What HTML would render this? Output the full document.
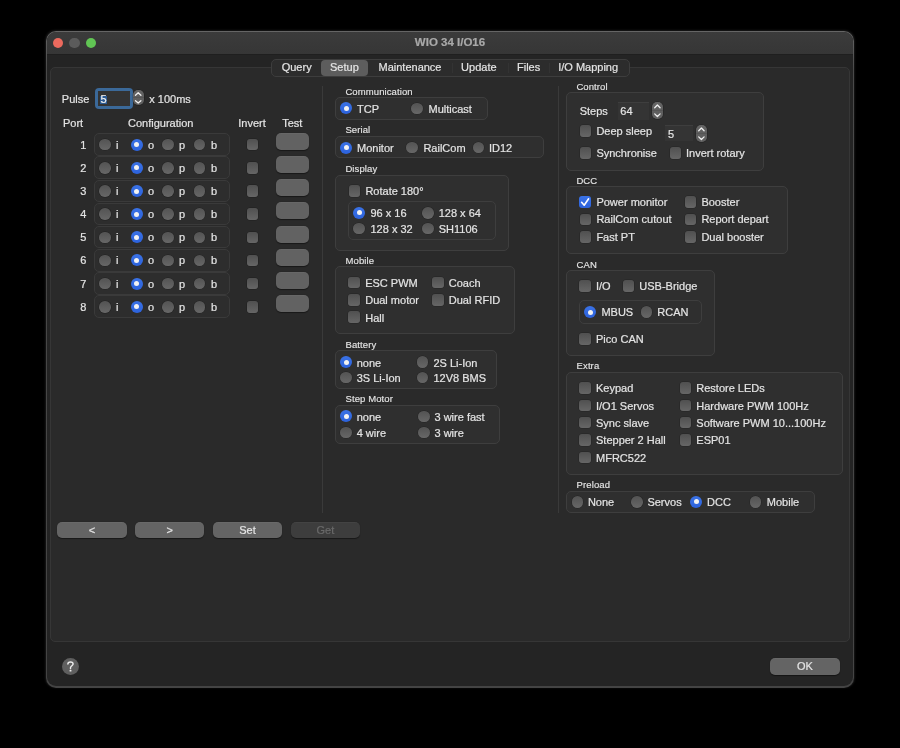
<!DOCTYPE html><html><head><meta charset="utf-8"><style>
html,body{margin:0;padding:0;width:900px;height:748px;background:#000;overflow:hidden}
body{position:relative;font-family:"Liberation Sans",sans-serif}
.t{position:absolute;white-space:nowrap;-webkit-text-stroke:0.2px currentColor}
#root{position:absolute;left:0;top:0;width:900px;height:748px;will-change:transform;background:#000}
.b{position:absolute}
.ru{position:absolute;border-radius:50%;background:linear-gradient(#535353,#676767);box-shadow:0 0 0 0.5px rgba(0,0,0,0.25)}
.rc{position:absolute;border-radius:50%;background:linear-gradient(#3a72e6,#2c62dc)}
.rc i{position:absolute;left:50%;top:50%;width:5px;height:5px;margin:-2.5px 0 0 -2.5px;border-radius:50%;background:#f2f2f2}
.cu{position:absolute;border-radius:3px;background:linear-gradient(#505050,#666666);box-shadow:0 0 0 0.5px rgba(0,0,0,0.25)}
.cc{position:absolute;border-radius:3px;background:linear-gradient(#3a72e6,#2c62dc)}
.cc svg{position:absolute;left:0;top:0}
</style></head><body><div id="root">

<div class="b" style="left:45px;top:30px;width:810px;height:658px;border-radius:11px;background:#000"></div>
<div class="b" style="left:46px;top:31px;width:808px;height:656.5px;border-radius:10px;background:linear-gradient(#656565,#4a4a4a 6%,#444 100%);box-shadow:0 -0.5px 2px 0.5px rgba(40,40,40,0.6)"></div>
<div class="b" style="left:47px;top:32px;width:806px;height:654.4px;border-radius:9px;background:#242424;overflow:hidden"><div style="position:absolute;left:0;top:0;width:806px;height:22px;background:linear-gradient(#3b3b3b,#363636);border-bottom:1px solid #1f1f1f"></div></div>
<div class="b" style="left:52.75px;top:37.75px;width:10.5px;height:10.5px;border-radius:50%;background:#ec6a5e"></div>
<div class="b" style="left:69.15px;top:37.75px;width:10.5px;height:10.5px;border-radius:50%;background:#5b5b5b"></div>
<div class="b" style="left:85.55px;top:37.75px;width:10.5px;height:10.5px;border-radius:50%;background:#61c554"></div>
<div class="t" style="left:250px;width:400px;text-align:center;top:36px;font-size:11.5px;line-height:13px;color:#a9a9a9;font-weight:bold;">WIO 34 I/O16</div>
<div class="b" style="left:50px;top:67px;width:800px;height:575px;background:#2a2a2a;border:1px solid #363636;border-radius:5px;box-sizing:border-box;"></div>
<div class="b" style="left:271px;top:59px;width:358.5px;height:17.700000000000003px;background:#2c2c2c;border:1px solid #3d3d3d;border-radius:5px;box-sizing:border-box;"></div>
<div class="b" style="left:321px;top:59.5px;width:47.3px;height:16.2px;background:#5d5d5d;border-radius:4px"></div>
<div class="b" style="left:451.6px;top:63px;width:1px;height:10px;background:#333333"></div>
<div class="b" style="left:507.5px;top:63px;width:1px;height:10px;background:#333333"></div>
<div class="b" style="left:548.7px;top:63px;width:1px;height:10px;background:#333333"></div>
<div class="t" style="left:281.7px;top:61px;font-size:11px;line-height:13px;color:#e4e4e4;font-weight:normal;">Query</div>
<div class="t" style="left:330px;top:61px;font-size:11px;line-height:13px;color:#e4e4e4;font-weight:normal;">Setup</div>
<div class="t" style="left:378.5px;top:61px;font-size:11px;line-height:13px;color:#e4e4e4;font-weight:normal;">Maintenance</div>
<div class="t" style="left:461.1px;top:61px;font-size:11px;line-height:13px;color:#e4e4e4;font-weight:normal;">Update</div>
<div class="t" style="left:517px;top:61px;font-size:11px;line-height:13px;color:#e4e4e4;font-weight:normal;">Files</div>
<div class="t" style="left:558.2px;top:61px;font-size:11px;line-height:13px;color:#e4e4e4;font-weight:normal;">I/O Mapping</div>
<div class="t" style="left:61.8px;top:93px;font-size:11px;line-height:13px;color:#e4e4e4;font-weight:normal;">Pulse</div>
<div class="b" style="left:95px;top:87.7px;width:37.8px;height:21.6px;border-radius:4px;background:#3b6999"></div>
<div class="b" style="left:98.3px;top:90.7px;width:31.4px;height:15.7px;background:#333333"></div>
<div class="b" style="left:100px;top:95.6px;width:7.1px;height:8.6px;background:#2c5a92"></div>
<div class="t" style="left:100.5px;top:93px;font-size:11px;line-height:13px;color:#f0f0f0;font-weight:normal;">5</div>
<div class="b" style="left:133.4px;top:90.1px;width:10.400000000000006px;height:15.300000000000011px;background:linear-gradient(#666,#5e5e5e 48%,#555 50%,#5e5e5e 52%,#616161);border-radius:5px;box-shadow:0 0 0 0.5px rgba(0,0,0,0.3)"><svg style="position:absolute;left:0;top:0" width="10.400000000000006" height="15.300000000000011" viewBox="0 0 10.400000000000006 15.300000000000011"><path d="M2.50 5.20 L5.20 2.75 L7.90 5.20" fill="none" stroke="#f0f0f0" stroke-width="1.3" stroke-linecap="round" stroke-linejoin="round"/><path d="M2.50 10.71 L5.20 13.01 L7.90 10.71" fill="none" stroke="#f0f0f0" stroke-width="1.3" stroke-linecap="round" stroke-linejoin="round"/></svg></div>
<div class="t" style="left:149.3px;top:93px;font-size:11px;line-height:13px;color:#e4e4e4;font-weight:normal;">x 100ms</div>
<div class="t" style="left:63px;top:117px;font-size:11px;line-height:13px;color:#e4e4e4;font-weight:normal;">Port</div>
<div class="t" style="left:128px;top:117px;font-size:11px;line-height:13px;color:#e4e4e4;font-weight:normal;">Configuration</div>
<div class="t" style="left:238.3px;top:117px;font-size:11px;line-height:13px;color:#e4e4e4;font-weight:normal;">Invert</div>
<div class="t" style="left:282.2px;top:117px;font-size:11px;line-height:13px;color:#e4e4e4;font-weight:normal;">Test</div>
<div class="b" style="left:94.3px;top:133.3px;width:135.89999999999998px;height:22.5px;background:#2d2d2d;border:1px solid #3a3a3a;border-radius:5px;box-sizing:border-box;"></div>
<div class="t" style="right:813.7px;top:138.70000000000002px;font-size:11px;line-height:13px;color:#e4e4e4;font-weight:normal;">1</div>
<div class="ru" style="left:99.3px;top:138.9px;width:11.6px;height:11.6px"></div>
<div class="t" style="left:116px;top:138.70000000000002px;font-size:11px;line-height:13px;color:#e4e4e4;font-weight:normal;">i</div>
<div class="rc" style="left:130.7px;top:138.70000000000002px;width:12px;height:12px"><i></i></div>
<div class="t" style="left:148px;top:138.70000000000002px;font-size:11px;line-height:13px;color:#e4e4e4;font-weight:normal;">o</div>
<div class="ru" style="left:162.2px;top:138.9px;width:11.6px;height:11.6px"></div>
<div class="t" style="left:179px;top:138.70000000000002px;font-size:11px;line-height:13px;color:#e4e4e4;font-weight:normal;">p</div>
<div class="ru" style="left:193.6px;top:138.9px;width:11.6px;height:11.6px"></div>
<div class="t" style="left:211px;top:138.70000000000002px;font-size:11px;line-height:13px;color:#e4e4e4;font-weight:normal;">b</div>
<div class="cu" style="left:246.75px;top:138.95000000000002px;width:11.5px;height:11.5px"></div>
<div class="b" style="left:276px;top:132.9px;width:33px;height:17px;background:#626262;border-radius:5px;box-shadow:0 0.5px 1px rgba(0,0,0,0.45),inset 0 0.5px 0 rgba(255,255,255,0.07)"></div>
<div class="b" style="left:94.3px;top:156.45000000000002px;width:135.89999999999998px;height:22.5px;background:#2d2d2d;border:1px solid #3a3a3a;border-radius:5px;box-sizing:border-box;"></div>
<div class="t" style="right:813.7px;top:161.85000000000002px;font-size:11px;line-height:13px;color:#e4e4e4;font-weight:normal;">2</div>
<div class="ru" style="left:99.3px;top:162.05px;width:11.6px;height:11.6px"></div>
<div class="t" style="left:116px;top:161.85000000000002px;font-size:11px;line-height:13px;color:#e4e4e4;font-weight:normal;">i</div>
<div class="rc" style="left:130.7px;top:161.85000000000002px;width:12px;height:12px"><i></i></div>
<div class="t" style="left:148px;top:161.85000000000002px;font-size:11px;line-height:13px;color:#e4e4e4;font-weight:normal;">o</div>
<div class="ru" style="left:162.2px;top:162.05px;width:11.6px;height:11.6px"></div>
<div class="t" style="left:179px;top:161.85000000000002px;font-size:11px;line-height:13px;color:#e4e4e4;font-weight:normal;">p</div>
<div class="ru" style="left:193.6px;top:162.05px;width:11.6px;height:11.6px"></div>
<div class="t" style="left:211px;top:161.85000000000002px;font-size:11px;line-height:13px;color:#e4e4e4;font-weight:normal;">b</div>
<div class="cu" style="left:246.75px;top:162.10000000000002px;width:11.5px;height:11.5px"></div>
<div class="b" style="left:276px;top:156.05px;width:33px;height:17px;background:#626262;border-radius:5px;box-shadow:0 0.5px 1px rgba(0,0,0,0.45),inset 0 0.5px 0 rgba(255,255,255,0.07)"></div>
<div class="b" style="left:94.3px;top:179.60000000000002px;width:135.89999999999998px;height:22.5px;background:#2d2d2d;border:1px solid #3a3a3a;border-radius:5px;box-sizing:border-box;"></div>
<div class="t" style="right:813.7px;top:185.00000000000003px;font-size:11px;line-height:13px;color:#e4e4e4;font-weight:normal;">3</div>
<div class="ru" style="left:99.3px;top:185.20000000000002px;width:11.6px;height:11.6px"></div>
<div class="t" style="left:116px;top:185.00000000000003px;font-size:11px;line-height:13px;color:#e4e4e4;font-weight:normal;">i</div>
<div class="rc" style="left:130.7px;top:185.00000000000003px;width:12px;height:12px"><i></i></div>
<div class="t" style="left:148px;top:185.00000000000003px;font-size:11px;line-height:13px;color:#e4e4e4;font-weight:normal;">o</div>
<div class="ru" style="left:162.2px;top:185.20000000000002px;width:11.6px;height:11.6px"></div>
<div class="t" style="left:179px;top:185.00000000000003px;font-size:11px;line-height:13px;color:#e4e4e4;font-weight:normal;">p</div>
<div class="ru" style="left:193.6px;top:185.20000000000002px;width:11.6px;height:11.6px"></div>
<div class="t" style="left:211px;top:185.00000000000003px;font-size:11px;line-height:13px;color:#e4e4e4;font-weight:normal;">b</div>
<div class="cu" style="left:246.75px;top:185.25000000000003px;width:11.5px;height:11.5px"></div>
<div class="b" style="left:276px;top:179.20000000000002px;width:33px;height:17px;background:#626262;border-radius:5px;box-shadow:0 0.5px 1px rgba(0,0,0,0.45),inset 0 0.5px 0 rgba(255,255,255,0.07)"></div>
<div class="b" style="left:94.3px;top:202.75px;width:135.89999999999998px;height:22.5px;background:#2d2d2d;border:1px solid #3a3a3a;border-radius:5px;box-sizing:border-box;"></div>
<div class="t" style="right:813.7px;top:208.15px;font-size:11px;line-height:13px;color:#e4e4e4;font-weight:normal;">4</div>
<div class="ru" style="left:99.3px;top:208.35px;width:11.6px;height:11.6px"></div>
<div class="t" style="left:116px;top:208.15px;font-size:11px;line-height:13px;color:#e4e4e4;font-weight:normal;">i</div>
<div class="rc" style="left:130.7px;top:208.15px;width:12px;height:12px"><i></i></div>
<div class="t" style="left:148px;top:208.15px;font-size:11px;line-height:13px;color:#e4e4e4;font-weight:normal;">o</div>
<div class="ru" style="left:162.2px;top:208.35px;width:11.6px;height:11.6px"></div>
<div class="t" style="left:179px;top:208.15px;font-size:11px;line-height:13px;color:#e4e4e4;font-weight:normal;">p</div>
<div class="ru" style="left:193.6px;top:208.35px;width:11.6px;height:11.6px"></div>
<div class="t" style="left:211px;top:208.15px;font-size:11px;line-height:13px;color:#e4e4e4;font-weight:normal;">b</div>
<div class="cu" style="left:246.75px;top:208.4px;width:11.5px;height:11.5px"></div>
<div class="b" style="left:276px;top:202.35px;width:33px;height:17px;background:#626262;border-radius:5px;box-shadow:0 0.5px 1px rgba(0,0,0,0.45),inset 0 0.5px 0 rgba(255,255,255,0.07)"></div>
<div class="b" style="left:94.3px;top:225.9px;width:135.89999999999998px;height:22.5px;background:#2d2d2d;border:1px solid #3a3a3a;border-radius:5px;box-sizing:border-box;"></div>
<div class="t" style="right:813.7px;top:231.3px;font-size:11px;line-height:13px;color:#e4e4e4;font-weight:normal;">5</div>
<div class="ru" style="left:99.3px;top:231.5px;width:11.6px;height:11.6px"></div>
<div class="t" style="left:116px;top:231.3px;font-size:11px;line-height:13px;color:#e4e4e4;font-weight:normal;">i</div>
<div class="rc" style="left:130.7px;top:231.3px;width:12px;height:12px"><i></i></div>
<div class="t" style="left:148px;top:231.3px;font-size:11px;line-height:13px;color:#e4e4e4;font-weight:normal;">o</div>
<div class="ru" style="left:162.2px;top:231.5px;width:11.6px;height:11.6px"></div>
<div class="t" style="left:179px;top:231.3px;font-size:11px;line-height:13px;color:#e4e4e4;font-weight:normal;">p</div>
<div class="ru" style="left:193.6px;top:231.5px;width:11.6px;height:11.6px"></div>
<div class="t" style="left:211px;top:231.3px;font-size:11px;line-height:13px;color:#e4e4e4;font-weight:normal;">b</div>
<div class="cu" style="left:246.75px;top:231.55px;width:11.5px;height:11.5px"></div>
<div class="b" style="left:276px;top:225.5px;width:33px;height:17px;background:#626262;border-radius:5px;box-shadow:0 0.5px 1px rgba(0,0,0,0.45),inset 0 0.5px 0 rgba(255,255,255,0.07)"></div>
<div class="b" style="left:94.3px;top:249.05px;width:135.89999999999998px;height:22.5px;background:#2d2d2d;border:1px solid #3a3a3a;border-radius:5px;box-sizing:border-box;"></div>
<div class="t" style="right:813.7px;top:254.45px;font-size:11px;line-height:13px;color:#e4e4e4;font-weight:normal;">6</div>
<div class="ru" style="left:99.3px;top:254.64999999999998px;width:11.6px;height:11.6px"></div>
<div class="t" style="left:116px;top:254.45px;font-size:11px;line-height:13px;color:#e4e4e4;font-weight:normal;">i</div>
<div class="rc" style="left:130.7px;top:254.45px;width:12px;height:12px"><i></i></div>
<div class="t" style="left:148px;top:254.45px;font-size:11px;line-height:13px;color:#e4e4e4;font-weight:normal;">o</div>
<div class="ru" style="left:162.2px;top:254.64999999999998px;width:11.6px;height:11.6px"></div>
<div class="t" style="left:179px;top:254.45px;font-size:11px;line-height:13px;color:#e4e4e4;font-weight:normal;">p</div>
<div class="ru" style="left:193.6px;top:254.64999999999998px;width:11.6px;height:11.6px"></div>
<div class="t" style="left:211px;top:254.45px;font-size:11px;line-height:13px;color:#e4e4e4;font-weight:normal;">b</div>
<div class="cu" style="left:246.75px;top:254.7px;width:11.5px;height:11.5px"></div>
<div class="b" style="left:276px;top:248.65px;width:33px;height:17px;background:#626262;border-radius:5px;box-shadow:0 0.5px 1px rgba(0,0,0,0.45),inset 0 0.5px 0 rgba(255,255,255,0.07)"></div>
<div class="b" style="left:94.3px;top:272.2px;width:135.89999999999998px;height:22.5px;background:#2d2d2d;border:1px solid #3a3a3a;border-radius:5px;box-sizing:border-box;"></div>
<div class="t" style="right:813.7px;top:277.59999999999997px;font-size:11px;line-height:13px;color:#e4e4e4;font-weight:normal;">7</div>
<div class="ru" style="left:99.3px;top:277.79999999999995px;width:11.6px;height:11.6px"></div>
<div class="t" style="left:116px;top:277.59999999999997px;font-size:11px;line-height:13px;color:#e4e4e4;font-weight:normal;">i</div>
<div class="rc" style="left:130.7px;top:277.59999999999997px;width:12px;height:12px"><i></i></div>
<div class="t" style="left:148px;top:277.59999999999997px;font-size:11px;line-height:13px;color:#e4e4e4;font-weight:normal;">o</div>
<div class="ru" style="left:162.2px;top:277.79999999999995px;width:11.6px;height:11.6px"></div>
<div class="t" style="left:179px;top:277.59999999999997px;font-size:11px;line-height:13px;color:#e4e4e4;font-weight:normal;">p</div>
<div class="ru" style="left:193.6px;top:277.79999999999995px;width:11.6px;height:11.6px"></div>
<div class="t" style="left:211px;top:277.59999999999997px;font-size:11px;line-height:13px;color:#e4e4e4;font-weight:normal;">b</div>
<div class="cu" style="left:246.75px;top:277.84999999999997px;width:11.5px;height:11.5px"></div>
<div class="b" style="left:276px;top:271.8px;width:33px;height:17px;background:#626262;border-radius:5px;box-shadow:0 0.5px 1px rgba(0,0,0,0.45),inset 0 0.5px 0 rgba(255,255,255,0.07)"></div>
<div class="b" style="left:94.3px;top:295.35px;width:135.89999999999998px;height:22.5px;background:#2d2d2d;border:1px solid #3a3a3a;border-radius:5px;box-sizing:border-box;"></div>
<div class="t" style="right:813.7px;top:300.75px;font-size:11px;line-height:13px;color:#e4e4e4;font-weight:normal;">8</div>
<div class="ru" style="left:99.3px;top:300.95px;width:11.6px;height:11.6px"></div>
<div class="t" style="left:116px;top:300.75px;font-size:11px;line-height:13px;color:#e4e4e4;font-weight:normal;">i</div>
<div class="rc" style="left:130.7px;top:300.75px;width:12px;height:12px"><i></i></div>
<div class="t" style="left:148px;top:300.75px;font-size:11px;line-height:13px;color:#e4e4e4;font-weight:normal;">o</div>
<div class="ru" style="left:162.2px;top:300.95px;width:11.6px;height:11.6px"></div>
<div class="t" style="left:179px;top:300.75px;font-size:11px;line-height:13px;color:#e4e4e4;font-weight:normal;">p</div>
<div class="ru" style="left:193.6px;top:300.95px;width:11.6px;height:11.6px"></div>
<div class="t" style="left:211px;top:300.75px;font-size:11px;line-height:13px;color:#e4e4e4;font-weight:normal;">b</div>
<div class="cu" style="left:246.75px;top:301.0px;width:11.5px;height:11.5px"></div>
<div class="b" style="left:276px;top:294.95000000000005px;width:33px;height:17px;background:#626262;border-radius:5px;box-shadow:0 0.5px 1px rgba(0,0,0,0.45),inset 0 0.5px 0 rgba(255,255,255,0.07)"></div>
<div class="b" style="left:322px;top:86px;width:1px;height:427px;background:#3a3a3a"></div>
<div class="b" style="left:557.5px;top:86px;width:1px;height:427px;background:#3a3a3a"></div>
<div class="b" style="left:57.1px;top:521.9px;width:69.69999999999999px;height:16.5px;background:#646464;border-radius:5px;box-shadow:0 0.5px 1px rgba(0,0,0,0.45),inset 0 0.5px 0 rgba(255,255,255,0.07)"></div>
<div class="t" style="left:-108.05px;width:400px;text-align:center;top:524.15px;font-size:11px;line-height:13px;color:#e4e4e4;font-weight:normal;">&lt;</div>
<div class="b" style="left:135px;top:521.9px;width:69.30000000000001px;height:16.5px;background:#646464;border-radius:5px;box-shadow:0 0.5px 1px rgba(0,0,0,0.45),inset 0 0.5px 0 rgba(255,255,255,0.07)"></div>
<div class="t" style="left:-30.349999999999994px;width:400px;text-align:center;top:524.15px;font-size:11px;line-height:13px;color:#e4e4e4;font-weight:normal;">&gt;</div>
<div class="b" style="left:212.6px;top:521.9px;width:69.70000000000002px;height:16.5px;background:#646464;border-radius:5px;box-shadow:0 0.5px 1px rgba(0,0,0,0.45),inset 0 0.5px 0 rgba(255,255,255,0.07)"></div>
<div class="t" style="left:47.44999999999999px;width:400px;text-align:center;top:524.15px;font-size:11px;line-height:13px;color:#e4e4e4;font-weight:normal;">Set</div>
<div class="b" style="left:290.9px;top:521.9px;width:69.10000000000002px;height:16.5px;background:#3d3d3d;border-radius:5px;box-shadow:0 0.5px 1px rgba(0,0,0,0.45),inset 0 0.5px 0 rgba(255,255,255,0.07)"></div>
<div class="t" style="left:125.44999999999999px;width:400px;text-align:center;top:524.15px;font-size:11px;line-height:13px;color:#6a6a6a;font-weight:normal;">Get</div>
<div class="t" style="left:345.4px;top:86px;font-size:9.5px;line-height:12px;color:#e4e4e4;font-weight:normal;letter-spacing:0.1px;-webkit-text-stroke:0.15px currentColor">Communication</div>
<div class="b" style="left:335.2px;top:97.4px;width:152.60000000000002px;height:22.19999999999999px;background:#2f2f2f;border:1px solid #3e3e3e;border-radius:5px;box-sizing:border-box;"></div>
<div class="rc" style="left:340.1px;top:102.4px;width:12px;height:12px"><i></i></div>
<div class="t" style="left:357px;top:102.8px;font-size:11px;line-height:13px;color:#e4e4e4;font-weight:normal;">TCP</div>
<div class="ru" style="left:411.4px;top:102.60000000000001px;width:11.6px;height:11.6px"></div>
<div class="t" style="left:428.5px;top:102.8px;font-size:11px;line-height:13px;color:#e4e4e4;font-weight:normal;">Multicast</div>
<div class="t" style="left:345.4px;top:124px;font-size:9.5px;line-height:12px;color:#e4e4e4;font-weight:normal;letter-spacing:0.1px;-webkit-text-stroke:0.15px currentColor">Serial</div>
<div class="b" style="left:335.2px;top:136.2px;width:208.8px;height:22.30000000000001px;background:#2f2f2f;border:1px solid #3e3e3e;border-radius:5px;box-sizing:border-box;"></div>
<div class="rc" style="left:340.1px;top:141.5px;width:12px;height:12px"><i></i></div>
<div class="t" style="left:357px;top:142px;font-size:11px;line-height:13px;color:#e4e4e4;font-weight:normal;">Monitor</div>
<div class="ru" style="left:406.09999999999997px;top:141.7px;width:11.6px;height:11.6px"></div>
<div class="t" style="left:423.4px;top:142px;font-size:11px;line-height:13px;color:#e4e4e4;font-weight:normal;">RailCom</div>
<div class="ru" style="left:472.5px;top:141.7px;width:11.6px;height:11.6px"></div>
<div class="t" style="left:489px;top:142px;font-size:11px;line-height:13px;color:#e4e4e4;font-weight:normal;">ID12</div>
<div class="t" style="left:345.4px;top:163px;font-size:9.5px;line-height:12px;color:#e4e4e4;font-weight:normal;letter-spacing:0.1px;-webkit-text-stroke:0.15px currentColor">Display</div>
<div class="b" style="left:335.2px;top:175px;width:173.8px;height:76.19999999999999px;background:#2f2f2f;border:1px solid #3e3e3e;border-radius:5px;box-sizing:border-box;"></div>
<div class="cu" style="left:348.65px;top:185.15px;width:11.5px;height:11.5px"></div>
<div class="t" style="left:365.4px;top:185px;font-size:11px;line-height:13px;color:#e4e4e4;font-weight:normal;">Rotate 180°</div>
<div class="b" style="left:348.2px;top:201.2px;width:147.5px;height:38.60000000000002px;background:#2f2f2f;border:1px solid #3e3e3e;border-radius:5px;box-sizing:border-box;"></div>
<div class="rc" style="left:353.0px;top:206.9px;width:12px;height:12px"><i></i></div>
<div class="t" style="left:370.5px;top:207px;font-size:11px;line-height:13px;color:#e4e4e4;font-weight:normal;">96 x 16</div>
<div class="ru" style="left:422.2px;top:207.1px;width:11.6px;height:11.6px"></div>
<div class="t" style="left:438.7px;top:207px;font-size:11px;line-height:13px;color:#e4e4e4;font-weight:normal;">128 x 64</div>
<div class="ru" style="left:353.2px;top:222.89999999999998px;width:11.6px;height:11.6px"></div>
<div class="t" style="left:370.5px;top:223px;font-size:11px;line-height:13px;color:#e4e4e4;font-weight:normal;">128 x 32</div>
<div class="ru" style="left:422.2px;top:222.89999999999998px;width:11.6px;height:11.6px"></div>
<div class="t" style="left:438.7px;top:223px;font-size:11px;line-height:13px;color:#e4e4e4;font-weight:normal;">SH1106</div>
<div class="t" style="left:345.5px;top:255px;font-size:9.5px;line-height:12px;color:#e4e4e4;font-weight:normal;letter-spacing:0.1px;-webkit-text-stroke:0.15px currentColor">Mobile</div>
<div class="b" style="left:335.4px;top:266.3px;width:179.20000000000005px;height:67.69999999999999px;background:#2f2f2f;border:1px solid #3e3e3e;border-radius:5px;box-sizing:border-box;"></div>
<div class="cu" style="left:348.45px;top:276.95px;width:11.5px;height:11.5px"></div>
<div class="t" style="left:365.2px;top:277px;font-size:11px;line-height:13px;color:#e4e4e4;font-weight:normal;">ESC PWM</div>
<div class="cu" style="left:432.25px;top:276.95px;width:11.5px;height:11.5px"></div>
<div class="t" style="left:448.8px;top:277px;font-size:11px;line-height:13px;color:#e4e4e4;font-weight:normal;">Coach</div>
<div class="cu" style="left:348.45px;top:294.05px;width:11.5px;height:11.5px"></div>
<div class="t" style="left:365.2px;top:294px;font-size:11px;line-height:13px;color:#e4e4e4;font-weight:normal;">Dual motor</div>
<div class="cu" style="left:432.25px;top:294.05px;width:11.5px;height:11.5px"></div>
<div class="t" style="left:448.8px;top:294px;font-size:11px;line-height:13px;color:#e4e4e4;font-weight:normal;">Dual RFID</div>
<div class="cu" style="left:348.45px;top:311.45px;width:11.5px;height:11.5px"></div>
<div class="t" style="left:365.2px;top:311.5px;font-size:11px;line-height:13px;color:#e4e4e4;font-weight:normal;">Hall</div>
<div class="t" style="left:345.5px;top:339px;font-size:9.5px;line-height:12px;color:#e4e4e4;font-weight:normal;letter-spacing:0.1px;-webkit-text-stroke:0.15px currentColor">Battery</div>
<div class="b" style="left:335.4px;top:350.4px;width:161.70000000000005px;height:39.10000000000002px;background:#2f2f2f;border:1px solid #3e3e3e;border-radius:5px;box-sizing:border-box;"></div>
<div class="rc" style="left:340.1px;top:356.2px;width:12px;height:12px"><i></i></div>
<div class="t" style="left:356.7px;top:356.5px;font-size:11px;line-height:13px;color:#e4e4e4;font-weight:normal;">none</div>
<div class="ru" style="left:416.59999999999997px;top:356.4px;width:11.6px;height:11.6px"></div>
<div class="t" style="left:433.4px;top:356.5px;font-size:11px;line-height:13px;color:#e4e4e4;font-weight:normal;">2S Li-Ion</div>
<div class="ru" style="left:340.3px;top:371.8px;width:11.6px;height:11.6px"></div>
<div class="t" style="left:356.7px;top:372px;font-size:11px;line-height:13px;color:#e4e4e4;font-weight:normal;">3S Li-Ion</div>
<div class="ru" style="left:416.59999999999997px;top:371.8px;width:11.6px;height:11.6px"></div>
<div class="t" style="left:433.4px;top:372px;font-size:11px;line-height:13px;color:#e4e4e4;font-weight:normal;">12V8 BMS</div>
<div class="t" style="left:345.5px;top:393px;font-size:9.5px;line-height:12px;color:#e4e4e4;font-weight:normal;letter-spacing:0.1px;-webkit-text-stroke:0.15px currentColor">Step Motor</div>
<div class="b" style="left:335.4px;top:405.1px;width:165.10000000000002px;height:38.69999999999999px;background:#2f2f2f;border:1px solid #3e3e3e;border-radius:5px;box-sizing:border-box;"></div>
<div class="rc" style="left:340.1px;top:410.4px;width:12px;height:12px"><i></i></div>
<div class="t" style="left:356.7px;top:410.8px;font-size:11px;line-height:13px;color:#e4e4e4;font-weight:normal;">none</div>
<div class="ru" style="left:418.0px;top:410.59999999999997px;width:11.6px;height:11.6px"></div>
<div class="t" style="left:434.5px;top:410.8px;font-size:11px;line-height:13px;color:#e4e4e4;font-weight:normal;">3 wire fast</div>
<div class="ru" style="left:340.3px;top:426.59999999999997px;width:11.6px;height:11.6px"></div>
<div class="t" style="left:356.7px;top:426.8px;font-size:11px;line-height:13px;color:#e4e4e4;font-weight:normal;">4 wire</div>
<div class="ru" style="left:418.0px;top:426.59999999999997px;width:11.6px;height:11.6px"></div>
<div class="t" style="left:434.5px;top:426.8px;font-size:11px;line-height:13px;color:#e4e4e4;font-weight:normal;">3 wire</div>
<div class="t" style="left:576.4px;top:81px;font-size:9.5px;line-height:12px;color:#e4e4e4;font-weight:normal;letter-spacing:0.1px;-webkit-text-stroke:0.15px currentColor">Control</div>
<div class="b" style="left:566.1px;top:92.2px;width:198.10000000000002px;height:78.60000000000001px;background:#2f2f2f;border:1px solid #3e3e3e;border-radius:5px;box-sizing:border-box;"></div>
<div class="t" style="left:579.7px;top:105px;font-size:11px;line-height:13px;color:#e4e4e4;font-weight:normal;">Steps</div>
<div class="b" style="left:617.5px;top:102.2px;width:31.700000000000045px;height:17.5px;background:#343434;border-top:1px solid #3e3e3e;box-sizing:border-box"></div>
<div class="t" style="left:620.3px;top:105px;font-size:11px;line-height:13px;color:#e4e4e4;font-weight:normal;">64</div>
<div class="b" style="left:652px;top:102.2px;width:10.799999999999955px;height:17.0px;background:linear-gradient(#666,#5e5e5e 48%,#555 50%,#5e5e5e 52%,#616161);border-radius:5px;box-shadow:0 0 0 0.5px rgba(0,0,0,0.3)"><svg style="position:absolute;left:0;top:0" width="10.799999999999955" height="17.0" viewBox="0 0 10.799999999999955 17.0"><path d="M2.70 5.78 L5.40 3.06 L8.10 5.78" fill="none" stroke="#f0f0f0" stroke-width="1.3" stroke-linecap="round" stroke-linejoin="round"/><path d="M2.70 11.90 L5.40 14.45 L8.10 11.90" fill="none" stroke="#f0f0f0" stroke-width="1.3" stroke-linecap="round" stroke-linejoin="round"/></svg></div>
<div class="cu" style="left:579.65px;top:125.05000000000001px;width:11.5px;height:11.5px"></div>
<div class="t" style="left:596.4px;top:125px;font-size:11px;line-height:13px;color:#e4e4e4;font-weight:normal;">Deep sleep</div>
<div class="b" style="left:665.3px;top:125.2px;width:27.700000000000045px;height:16.10000000000001px;background:#343434;border-top:1px solid #3e3e3e;box-sizing:border-box"></div>
<div class="t" style="left:668px;top:127.5px;font-size:11px;line-height:13px;color:#e4e4e4;font-weight:normal;">5</div>
<div class="b" style="left:695.8px;top:124.6px;width:10.800000000000068px;height:17.0px;background:linear-gradient(#666,#5e5e5e 48%,#555 50%,#5e5e5e 52%,#616161);border-radius:5px;box-shadow:0 0 0 0.5px rgba(0,0,0,0.3)"><svg style="position:absolute;left:0;top:0" width="10.800000000000068" height="17.0" viewBox="0 0 10.800000000000068 17.0"><path d="M2.70 5.78 L5.40 3.06 L8.10 5.78" fill="none" stroke="#f0f0f0" stroke-width="1.3" stroke-linecap="round" stroke-linejoin="round"/><path d="M2.70 11.90 L5.40 14.45 L8.10 11.90" fill="none" stroke="#f0f0f0" stroke-width="1.3" stroke-linecap="round" stroke-linejoin="round"/></svg></div>
<div class="cu" style="left:579.65px;top:147.25px;width:11.5px;height:11.5px"></div>
<div class="t" style="left:596.4px;top:147.3px;font-size:11px;line-height:13px;color:#e4e4e4;font-weight:normal;">Synchronise</div>
<div class="cu" style="left:669.75px;top:147.25px;width:11.5px;height:11.5px"></div>
<div class="t" style="left:686px;top:147.3px;font-size:11px;line-height:13px;color:#e4e4e4;font-weight:normal;">Invert rotary</div>
<div class="t" style="left:576.4px;top:175px;font-size:9.5px;line-height:12px;color:#e4e4e4;font-weight:normal;letter-spacing:0.1px;-webkit-text-stroke:0.15px currentColor">DCC</div>
<div class="b" style="left:566.1px;top:186.3px;width:222.19999999999993px;height:67.89999999999998px;background:#2f2f2f;border:1px solid #3e3e3e;border-radius:5px;box-sizing:border-box;"></div>
<div class="cc" style="left:579.3px;top:196.2px;width:12px;height:12px"><svg width="12" height="12" viewBox="0 0 12 12"><path d="M2.6 6.3 L5.2 9.2 L9.6 2.8" fill="none" stroke="#fff" stroke-width="1.6" stroke-linecap="round" stroke-linejoin="round"/></svg></div>
<div class="t" style="left:596.4px;top:196px;font-size:11px;line-height:13px;color:#e4e4e4;font-weight:normal;">Power monitor</div>
<div class="cu" style="left:684.95px;top:196.45px;width:11.5px;height:11.5px"></div>
<div class="t" style="left:701.4px;top:196px;font-size:11px;line-height:13px;color:#e4e4e4;font-weight:normal;">Booster</div>
<div class="cu" style="left:579.55px;top:213.95px;width:11.5px;height:11.5px"></div>
<div class="t" style="left:596.4px;top:213.4px;font-size:11px;line-height:13px;color:#e4e4e4;font-weight:normal;">RailCom cutout</div>
<div class="cu" style="left:684.95px;top:213.95px;width:11.5px;height:11.5px"></div>
<div class="t" style="left:701.4px;top:213.4px;font-size:11px;line-height:13px;color:#e4e4e4;font-weight:normal;">Report depart</div>
<div class="cu" style="left:579.55px;top:231.45px;width:11.5px;height:11.5px"></div>
<div class="t" style="left:596.4px;top:230.8px;font-size:11px;line-height:13px;color:#e4e4e4;font-weight:normal;">Fast PT</div>
<div class="cu" style="left:684.95px;top:231.45px;width:11.5px;height:11.5px"></div>
<div class="t" style="left:701.4px;top:230.8px;font-size:11px;line-height:13px;color:#e4e4e4;font-weight:normal;">Dual booster</div>
<div class="t" style="left:576.6px;top:259px;font-size:9.5px;line-height:12px;color:#e4e4e4;font-weight:normal;letter-spacing:0.1px;-webkit-text-stroke:0.15px currentColor">CAN</div>
<div class="b" style="left:566.2px;top:270.2px;width:149.19999999999993px;height:85.80000000000001px;background:#2f2f2f;border:1px solid #3e3e3e;border-radius:5px;box-sizing:border-box;"></div>
<div class="cu" style="left:579.45px;top:280.45px;width:11.5px;height:11.5px"></div>
<div class="t" style="left:596px;top:280px;font-size:11px;line-height:13px;color:#e4e4e4;font-weight:normal;">I/O</div>
<div class="cu" style="left:622.65px;top:280.45px;width:11.5px;height:11.5px"></div>
<div class="t" style="left:639.3px;top:280px;font-size:11px;line-height:13px;color:#e4e4e4;font-weight:normal;">USB-Bridge</div>
<div class="b" style="left:579.4px;top:300.3px;width:122.89999999999998px;height:23.69999999999999px;background:#2f2f2f;border:1px solid #3e3e3e;border-radius:5px;box-sizing:border-box;"></div>
<div class="rc" style="left:584.0px;top:306.1px;width:12px;height:12px"><i></i></div>
<div class="t" style="left:601.4px;top:306.4px;font-size:11px;line-height:13px;color:#e4e4e4;font-weight:normal;">MBUS</div>
<div class="ru" style="left:640.6px;top:306.3px;width:11.6px;height:11.6px"></div>
<div class="t" style="left:657.3px;top:306.4px;font-size:11px;line-height:13px;color:#e4e4e4;font-weight:normal;">RCAN</div>
<div class="cu" style="left:579.45px;top:333.25px;width:11.5px;height:11.5px"></div>
<div class="t" style="left:596px;top:333.3px;font-size:11px;line-height:13px;color:#e4e4e4;font-weight:normal;">Pico CAN</div>
<div class="t" style="left:576.6px;top:360px;font-size:9.5px;line-height:12px;color:#e4e4e4;font-weight:normal;letter-spacing:0.1px;-webkit-text-stroke:0.15px currentColor">Extra</div>
<div class="b" style="left:566.2px;top:371.9px;width:276.4px;height:102.80000000000001px;background:#2f2f2f;border:1px solid #3e3e3e;border-radius:5px;box-sizing:border-box;"></div>
<div class="cu" style="left:579.45px;top:382.05px;width:11.5px;height:11.5px"></div>
<div class="t" style="left:596px;top:382.1px;font-size:11px;line-height:13px;color:#e4e4e4;font-weight:normal;">Keypad</div>
<div class="cu" style="left:679.75px;top:382.05px;width:11.5px;height:11.5px"></div>
<div class="t" style="left:696.3px;top:382.1px;font-size:11px;line-height:13px;color:#e4e4e4;font-weight:normal;">Restore LEDs</div>
<div class="cu" style="left:579.45px;top:399.5px;width:11.5px;height:11.5px"></div>
<div class="t" style="left:596px;top:399.55px;font-size:11px;line-height:13px;color:#e4e4e4;font-weight:normal;">I/O1 Servos</div>
<div class="cu" style="left:679.75px;top:399.5px;width:11.5px;height:11.5px"></div>
<div class="t" style="left:696.3px;top:399.55px;font-size:11px;line-height:13px;color:#e4e4e4;font-weight:normal;">Hardware PWM 100Hz</div>
<div class="cu" style="left:579.45px;top:416.95px;width:11.5px;height:11.5px"></div>
<div class="t" style="left:596px;top:417.0px;font-size:11px;line-height:13px;color:#e4e4e4;font-weight:normal;">Sync slave</div>
<div class="cu" style="left:679.75px;top:416.95px;width:11.5px;height:11.5px"></div>
<div class="t" style="left:696.3px;top:417.0px;font-size:11px;line-height:13px;color:#e4e4e4;font-weight:normal;">Software PWM 10...100Hz</div>
<div class="cu" style="left:579.45px;top:434.4px;width:11.5px;height:11.5px"></div>
<div class="t" style="left:596px;top:434.45px;font-size:11px;line-height:13px;color:#e4e4e4;font-weight:normal;">Stepper 2 Hall</div>
<div class="cu" style="left:679.75px;top:434.4px;width:11.5px;height:11.5px"></div>
<div class="t" style="left:696.3px;top:434.45px;font-size:11px;line-height:13px;color:#e4e4e4;font-weight:normal;">ESP01</div>
<div class="cu" style="left:579.45px;top:451.85px;width:11.5px;height:11.5px"></div>
<div class="t" style="left:596px;top:451.90000000000003px;font-size:11px;line-height:13px;color:#e4e4e4;font-weight:normal;">MFRC522</div>
<div class="t" style="left:576.6px;top:479px;font-size:9.5px;line-height:12px;color:#e4e4e4;font-weight:normal;letter-spacing:0.1px;-webkit-text-stroke:0.15px currentColor">Preload</div>
<div class="b" style="left:566.2px;top:490.6px;width:248.39999999999998px;height:22.299999999999955px;background:#2f2f2f;border:1px solid #3e3e3e;border-radius:5px;box-sizing:border-box;"></div>
<div class="ru" style="left:571.5px;top:496.09999999999997px;width:11.6px;height:11.6px"></div>
<div class="t" style="left:587.9px;top:496.2px;font-size:11px;line-height:13px;color:#e4e4e4;font-weight:normal;">None</div>
<div class="ru" style="left:631.0px;top:496.09999999999997px;width:11.6px;height:11.6px"></div>
<div class="t" style="left:647.4px;top:496.2px;font-size:11px;line-height:13px;color:#e4e4e4;font-weight:normal;">Servos</div>
<div class="rc" style="left:690.3px;top:495.9px;width:12px;height:12px"><i></i></div>
<div class="t" style="left:707px;top:496.2px;font-size:11px;line-height:13px;color:#e4e4e4;font-weight:normal;">DCC</div>
<div class="ru" style="left:749.7px;top:496.09999999999997px;width:11.6px;height:11.6px"></div>
<div class="t" style="left:766.8px;top:496.2px;font-size:11px;line-height:13px;color:#e4e4e4;font-weight:normal;">Mobile</div>
<div class="b" style="left:61.5px;top:657.6px;width:17px;height:17px;border-radius:50%;background:#5f5f5f"><svg style="position:absolute;left:0;top:0" width="17" height="17" viewBox="0 0 17 17"><path d="M5.9 6.0 C5.9 4.6 7.0 3.9 8.5 3.9 C10.0 3.9 11.1 4.8 11.1 6.1 C11.1 7.6 8.5 8.0 8.5 9.8 L8.5 10.4" fill="none" stroke="#ececec" stroke-width="1.45" stroke-linecap="round"/><rect x="7.55" y="11.8" width="1.9" height="1.6" rx="0.5" fill="#ececec"/></svg></div>
<div class="b" style="left:769.9px;top:657.9px;width:70.0px;height:16.899999999999977px;background:#646464;border-radius:5px;box-shadow:0 0.5px 1px rgba(0,0,0,0.45),inset 0 0.5px 0 rgba(255,255,255,0.07)"></div>
<div class="t" style="left:604.9px;width:400px;text-align:center;top:660.3499999999999px;font-size:11px;line-height:13px;color:#e4e4e4;font-weight:normal;">OK</div>
</div></body></html>
